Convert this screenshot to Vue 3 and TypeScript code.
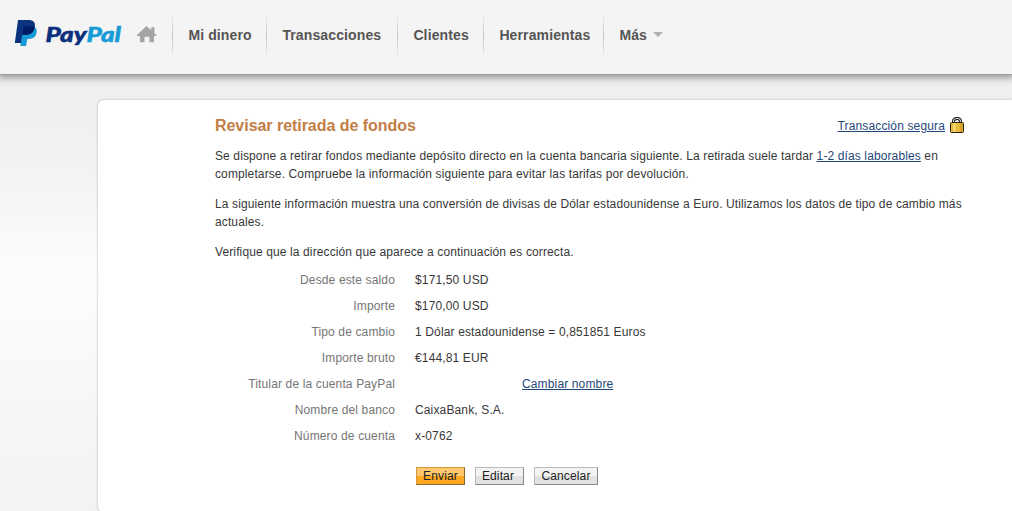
<script setup lang="ts">
interface NavItem {
  label: string
  width: number
  menu?: boolean
}

interface DetailRow {
  label: string
  value?: string
  link?: string
}

const navItems: NavItem[] = [
  { label: 'Mi dinero', width: 94 },
  { label: 'Transacciones', width: 131 },
  { label: 'Clientes', width: 86 },
  { label: 'Herramientas', width: 120 },
  { label: 'Más', width: 76, menu: true },
]

const rows: DetailRow[] = [
  { label: 'Desde este saldo', value: '$171,50 USD' },
  { label: 'Importe', value: '$170,00 USD' },
  { label: 'Tipo de cambio', value: '1 Dólar estadounidense = 0,851851 Euros' },
  { label: 'Importe bruto', value: '€144,81 EUR' },
  { label: 'Titular de la cuenta PayPal', link: 'Cambiar nombre' },
  { label: 'Nombre del banco', value: 'CaixaBank, S.A.' },
  { label: 'Número de cuenta', value: 'x-0762' },
]
</script>

<template>
  <div class="page">
    <header class="header">
      <a class="logo" aria-label="PayPal">
        <svg class="logo__mark" viewBox="0 0 24 28" aria-hidden="true">
          <path fill="#179bd7" d="M20 7.800C23.300 9.500 23.200 13 22 15.800 20.800 18.900 18 20 14.500 20h-1.200L12 27H6.300L9 9z"></path>
          <path fill="#0a3380" d="M4 1h10.500c4.800 0 7.200 2.500 6.300 7-1 5.500-4.300 7.700-9 7.700H8.300L7 24H.8z"></path>
          <path fill="#001c64" d="M9.600 7.300h7.900c1.300 0 2.300.3 3.200.9-1.100 5.300-4.300 7.500-8.900 7.500H8.300z"></path>
        </svg>
        <svg class="logo__word" viewBox="0 0 78 28" aria-hidden="true">
          <text x="-.5" y="22.700" textLength="75.500" lengthAdjust="spacingAndGlyphs"><tspan class="logo__pay">Pay</tspan><tspan class="logo__pal">Pal</tspan></text>
        </svg>
      </a>
      <a class="home" aria-label="Inicio">
        <svg viewBox="0 0 20 17" aria-hidden="true">
          <path d="M0 9L9.500 0l4.700 4.300V1.300h3.300v6L19.500 9.200V10H17v6.300h-4.500v-5.500H7.500v5.500H3V10H0z"></path>
        </svg>
      </a>
      <nav class="nav">
        <a
          v-for="item in navItems"
          :key="item.label"
          class="nav__item"
          :style="{ width: `${item.width}px` }"
        >
          {{ item.label }}
          <span v-if="item.menu" class="nav__arrow"></span>
        </a>
      </nav>
    </header>

    <main class="card">
      <div class="card__head">
        <h1 class="title">Revisar retirada de fondos</h1>
        <div class="secure">
          <a class="link">Transacción segura</a>
          <svg class="secure__lock" viewBox="0 0 14 16" aria-hidden="true">
            <path d="M3.500 7V4.500c0-4 7-4 7 0V7" fill="none" stroke="#111" stroke-width="3"></path>
            <path d="M3.500 7V4.500c0-4 7-4 7 0V7" fill="none" stroke="#ddd" stroke-width="1.200"></path>
            <rect x=".5" y="5.500" width="13" height="10" rx="1" fill="#e8b93c" stroke="#2b2005"></rect>
            <path d="M4.500 6v9" stroke="#f8dc80" stroke-width="2"></path>
            <path d="M11.500 6v9" stroke="#cf9a25" stroke-width="2"></path>
          </svg>
        </div>
      </div>

      <p class="text">
        Se dispone a retirar fondos mediante depósito directo en la cuenta bancaria siguiente. La retirada suele tardar <a class="link">1-2 días laborables</a> en<br>completarse. Compruebe la información siguiente para evitar las tarifas por devolución.
      </p>
      <p class="text">
        La siguiente información muestra una conversión de divisas de Dólar estadounidense a Euro. Utilizamos los datos de tipo de cambio más<br>actuales.
      </p>
      <p class="text">Verifique que la dirección que aparece a continuación es correcta.</p>

      <dl class="details">
        <div v-for="row in rows" :key="row.label" class="details__row">
          <dt>{{ row.label }}</dt>
          <dd>
            {{ row.value }}
            <a v-if="row.link" class="link link--offset">{{ row.link }}</a>
          </dd>
        </div>
      </dl>

      <div class="actions">
        <button class="button button--primary" type="button">Enviar</button>
        <button class="button" type="button">Editar</button>
        <button class="button button--wide" type="button">Cancelar</button>
      </div>
    </main>
  </div>
</template>

<style>
body {
  margin: 0;
  overflow: hidden;
}
</style>

<style scoped>
.page {
  box-sizing: border-box;
  height: 511px;
  overflow: hidden;
  background: linear-gradient(#efefef 85px, #f3f3f3 170px, #fdfdfd 275px, #f7f7f7 400px, #f3f3f3 511px);
  color: #383838;
  font-family: 'Liberation Sans', Arial, sans-serif;
  font-size: 12px;
  letter-spacing: 0.14px;
}

.header {
  display: flex;
  box-sizing: border-box;
  height: 75px;
  padding-left: 14px;
  border-bottom: 1px solid #a0a0a0;
  background: #f4f4f4;
  box-shadow: 0 0 8px 2px rgba(0, 0, 0, 0.45);
}

.logo {
  display: flex;
  width: 123px;
  padding-top: 19px;
}

.logo__mark {
  width: 24px;
  height: 28px;
}

.logo__word {
  width: 78px;
  height: 28px;
  margin-left: 8px;
  overflow: visible;
  font-family: Lato, sans-serif;
  font-size: 21.5px;
  font-style: italic;
  font-weight: 900;
  letter-spacing: 0;
  stroke-width: 0.5px;
}

.logo__pay {
  fill: #0a2f7c;
  stroke: #0a2f7c;
}

.logo__pal {
  fill: #179bd7;
  stroke: #179bd7;
}

.home {
  width: 35px;
  padding-top: 26px;
}

.home svg {
  display: block;
  width: 20px;
  height: 17px;
  fill: #a4a4a4;
}

.nav {
  display: flex;
  height: 41px;
  padding-top: 14px;
}

.nav__item {
  display: flex;
  box-sizing: border-box;
  align-items: center;
  height: 41px;
  padding-left: 15.4px;
  border-left: 1px solid;
  border-image: linear-gradient(rgba(190, 190, 190, 0), #c4c4c4 50%, rgba(190, 190, 190, 0.2)) 1;
  color: #555;
  font-size: 14px;
  font-weight: 700;
  letter-spacing: 0.12px;
  white-space: nowrap;
}

.nav__arrow {
  margin-left: 6px;
  border-top: 5px solid #b0b0b0;
  border-right: 5px solid transparent;
  border-left: 5px solid transparent;
}

.card {
  box-sizing: border-box;
  height: 412px;
  margin: 25px 0 0 98px;
  padding: 17px 48px 0 117px;
  border-radius: 6px 0 0 6px;
  background: #fff;
  box-shadow: 0 0 3px rgba(0, 0, 0, 0.25);
}

.card__head {
  display: flex;
  justify-content: space-between;
  height: 30px;
}

.title {
  margin: 0;
  color: #c27e45;
  font-size: 16px;
  font-weight: 700;
  line-height: 18px;
  letter-spacing: -0.04px;
}

.secure {
  display: flex;
  gap: 5px;
  line-height: 18px;
}

.secure__lock {
  width: 14px;
  height: 16px;
}

.link {
  color: #1f477a;
  text-decoration: underline;
}

.link--offset {
  margin-left: 107px;
}

.text {
  margin: 0 0 12px;
  line-height: 18px;
  letter-spacing: 0.118px;
  white-space: nowrap;
}

.details {
  margin: -2px 0 0;
}

.details__row {
  display: grid;
  grid-template-columns: 180px 1fr;
  gap: 20px;
  height: 26px;
  line-height: 18px;
}

.details dt {
  color: #757575;
  text-align: right;
}

.details dd {
  margin: 0;
}

.actions {
  display: flex;
  gap: 10px;
  padding: 14px 0 0 201px;
}

.button {
  box-sizing: border-box;
  width: 49px;
  height: 18px;
  padding: 0 3px 0 0;
  border: 1px solid #bbb;
  border-right-color: #888;
  border-bottom-color: #888;
  background: linear-gradient(#f3f3f3 50%, #e1e1e1 50%);
  color: #222;
  font-family: inherit;
  font-size: 12px;
  line-height: 15px;
  letter-spacing: 0.13px;
}

.button--primary {
  padding-right: 0;
  border-color: #d39a3c #8f682d #8f682d #d39a3c;
  background: linear-gradient(#ffc86f 50%, #ffa822 50%);
}

.button--wide {
  width: 64px;
  padding-right: 0;
}
</style>
